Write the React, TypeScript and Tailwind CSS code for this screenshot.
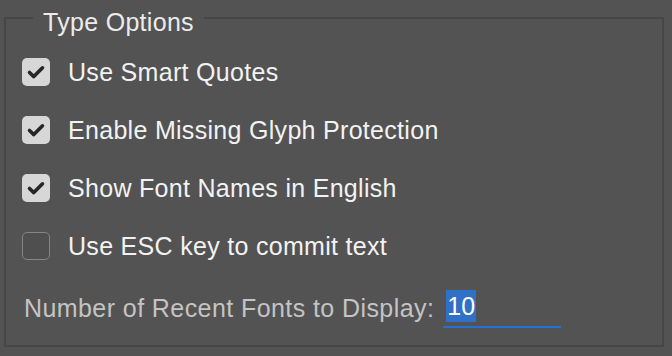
import React, { useState } from "react";

const options = [
  { id: "smartQuotes", label: "Use Smart Quotes", checked: true },
  { id: "glyphProtection", label: "Enable Missing Glyph Protection", checked: true },
  { id: "englishNames", label: "Show Font Names in English", checked: true },
  { id: "escCommit", label: "Use ESC key to commit text", checked: false },
];

const CheckBox: React.FC<{ checked: boolean; onToggle: () => void }> = ({ checked, onToggle }) => (
  <button
    type="button"
    onClick={onToggle}
    className={
      checked
        ? "w-[28px] h-[28px] shrink-0 rounded-[5px] bg-[#d7d7d7] flex items-center justify-center"
        : "w-[28px] h-[28px] shrink-0 rounded-[5px] bg-[#4f4f4f] border-[1.5px] border-[#858585]"
    }
  >
    {checked && (
      <svg width="28" height="28" viewBox="0 0 28 28">
        <path
          d="M7.5 14.5 L11.8 18.6 L20.5 9.8"
          fill="none"
          stroke="#262626"
          strokeWidth="3.6"
          strokeLinecap="round"
          strokeLinejoin="round"
        />
      </svg>
    )}
  </button>
);

export default function App() {
  const [values, setValues] = useState<Record<string, boolean>>(
    Object.fromEntries(options.map((o) => [o.id, o.checked]))
  );

  return (
    <div
      className="w-[672px] h-[356px] bg-[#535353] pt-[17px] pl-[4px] overflow-hidden"
      style={{ fontFamily: '"Liberation Sans", Arial, sans-serif' }}
    >
      <div className="relative w-[660px] h-[330px] border-2 border-[#464646]">
        {/* Group title sitting on the border */}
        <div className="absolute left-[27px] top-[-11px] px-[10px] bg-[#535353] text-[25px] leading-[29px] tracking-[0.3px] text-[#ececec]">
          Type Options
        </div>

        <div className="flex flex-col gap-[30px] pt-[39px] pl-[16px]">
          {options.map((o) => (
            <label key={o.id} className="flex items-center gap-[18px] h-[28px] cursor-default">
              <CheckBox
                checked={values[o.id]}
                onToggle={() => setValues((v) => ({ ...v, [o.id]: !v[o.id] }))}
              />
              <span className="text-[25px] leading-[28px] tracking-[0.3px] text-[#f2f2f2]">
                {o.label}
              </span>
            </label>
          ))}

          <div className="flex items-start">
            <span className="ml-[2px] text-[25px] leading-[36px] tracking-[0.42px] text-[#c4c4c4]">
              Number of Recent Fonts to Display:
            </span>
            <div className="ml-[9px] w-[118px] flex flex-col">
              <div className="pl-[3px] h-[32px]">
                <span className="inline-block h-[32px] px-[1px] bg-[#2f71c6] text-[25px] leading-[32px] text-white">
                  10
                </span>
              </div>
              <div className="mt-[4px] h-[2px] bg-[#2471d6]" />
            </div>
          </div>
        </div>
      </div>
    </div>
  );
}
